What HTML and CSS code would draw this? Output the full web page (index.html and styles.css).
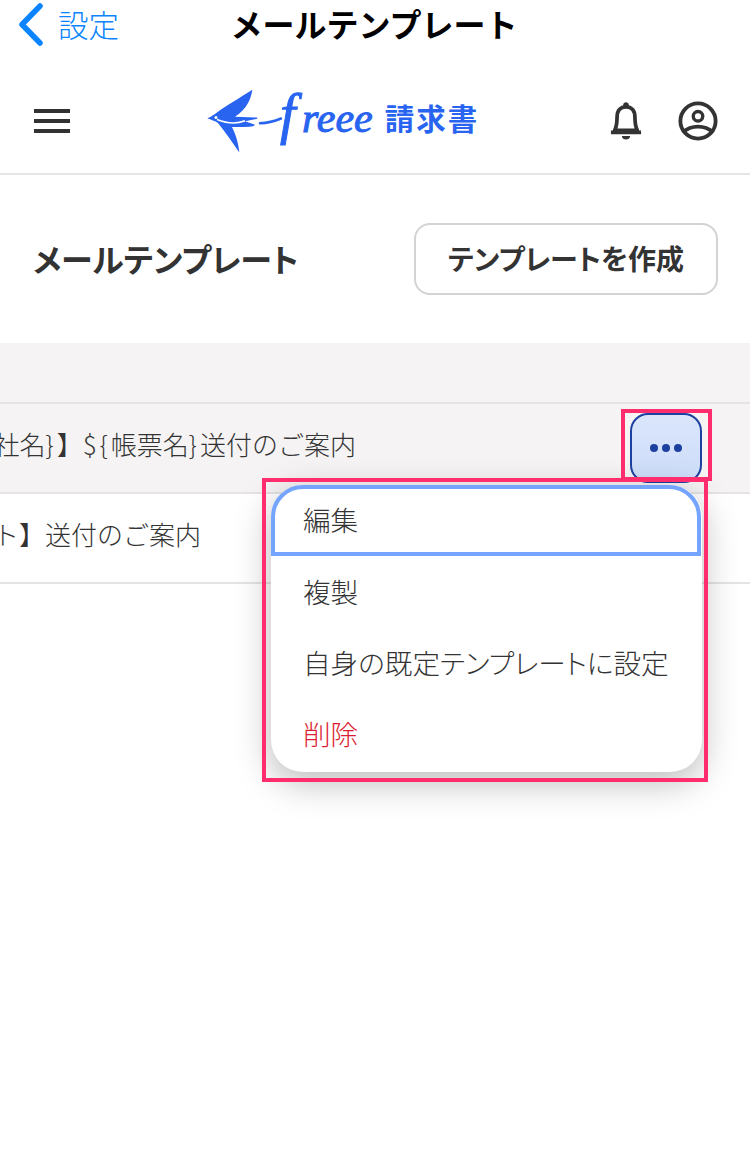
FILE: index.html
```html
<!DOCTYPE html>
<html lang="ja">
<head>
<meta charset="utf-8">
<title>メールテンプレート</title>
<link rel="stylesheet" href="styles.css">
</head>
<body>
<div class="page">
  <nav class="ios-nav">
    <div class="ios-back">
      <svg class="ios-chevron" width="28" height="44" viewBox="0 0 28 44"><path d="M22 3 L4 21.500 L22 40" fill="none" stroke="#0a84ff" stroke-width="5.500" stroke-linecap="round" stroke-linejoin="round"/></svg>
      <span>設定</span>
    </div>
    <div class="ios-title">メールテンプレート</div>
  </nav>
  <header class="app-header">
    <div class="hamburger"><i></i><i></i><i></i></div>
    <div class="logo">
      <svg class="logo-mark" width="180" height="70" viewBox="0 0 180 70">
        <path fill="#2864f0" d="M2.300 32.500 C5 31 7 30 10 28 C20 20 35 12 47.300 3.800 C46 13 42 23 30 30.800 L52.300 31.500 L52.300 32.800 L40 35.300 L50 38.800 L48.300 40.200 C40 41 33 41.300 27 41 C30 47 33.500 56 34.300 66.500 C28 57 20 46 13 37 C10 35 6 33.500 2.300 32.500 Z"/>
        <path fill="none" stroke="#fff" stroke-width="1.600" d="M12 33.500 C22 37.500 32 38 40 34.800"/>
        <circle cx="11" cy="31.500" r="1.500" fill="#fff"/>
        <path fill="none" stroke="#2864f0" stroke-width="2.500" stroke-linecap="round" d="M55 37.200 C63 37 70 35 76 32.500"/>
        <text class="logo-word"><tspan class="logo-f" x="75" y="47">f</tspan><tspan x="97" y="46">reee</tspan></text>
      </svg>
      <span class="logo-name">請求書</span>
    </div>
    <div class="header-icons">
      <svg width="32" height="40" viewBox="0 0 34 42"><path fill="none" stroke="#333" stroke-width="4" stroke-linejoin="round" d="M5 31 C7 27 7.500 23 7.500 17 C7.500 10 11 6 17 6 C23 6 26.500 10 26.500 17 C26.500 23 27 27 29 31 Z"/><path fill="#333" d="M1 31 H33 V35 H1 Z M14 4 C14 0 20 0 20 4 V7 H14 Z M12.500 37 H21.500 C21 42 13 42 12.500 37 Z"/></svg>
      <svg width="40" height="40" viewBox="0 0 42 42"><circle cx="21" cy="21" r="18.500" fill="none" stroke="#333" stroke-width="4"/><circle cx="21" cy="16" r="5" fill="none" stroke="#333" stroke-width="3.500"/><path fill="none" stroke="#333" stroke-width="4" d="M5 33 C14 25 28 25 37 33"/></svg>
    </div>
  </header>
  <section class="title-row">
    <h1 class="page-title">メールテンプレート</h1>
    <button class="create-btn">テンプレートを作成</button>
  </section>
  <div class="table">
    <div class="table-head"></div>
    <div class="row row-active">
      <div class="name name-long"><span>【<span class="sym">${</span>会社名<span class="sym">}</span>】<span class="sym">${</span>帳票名<span class="sym">}</span>送付のご案内</span></div>
      <button class="more-btn"><i></i><i></i><i></i></button>
    </div>
    <div class="row">
      <div class="name name-short"><span>【テスト】送付のご案内</span></div>
    </div>
  </div>
  <ul class="menu">
    <li class="menu-item menu-item-focus">編集</li>
    <li class="menu-item">複製</li>
    <li class="menu-item">自身の既定テンプレートに設定</li>
    <li class="menu-item menu-item-danger">削除</li>
  </ul>
  <div class="mark mark-btn"></div>
  <div class="mark mark-menu"></div>
</div>
</body>
</html>
```
FILE: styles.css
```css
* { box-sizing: border-box; }
html, body { margin: 0; padding: 0; background: #fff; }
body { font-family: "Noto Sans CJK JP", "Noto Sans", sans-serif; color: #333; }
.page { position: relative; width: 750px; height: 1170px; overflow: hidden; }

.ios-nav { position: relative; height: 50px; padding-bottom: 4px; display: flex; align-items: center; justify-content: center; }
.ios-back { position: absolute; left: 18px; top: 1px; display: flex; align-items: center; gap: 12px; color: #0a84ff; font-size: 30.500px; font-weight: 300; line-height: 44px; }
.ios-chevron { margin-top: 2px; }
.ios-title { margin-left: -2px; font-size: 32px; font-weight: 700; color: #000; line-height: 46px; }

.app-header { height: 125px; padding: 18px 32px 0 34px; border-bottom: 2px solid #e5e5e5; display: flex; align-items: center; justify-content: space-between; }
.hamburger { width: 36px; display: flex; flex-direction: column; gap: 6px; }
.hamburger i { display: block; height: 4px; background: #323232; }
.logo { display: flex; align-items: center; margin-left: 4px; }
.logo-mark { display: block; }
.logo-word { font-family: "Liberation Serif", serif; font-style: italic; font-size: 42px; fill: #2864f0; stroke: #2864f0; stroke-width: 1px; }
.logo-f { font-size: 56px; }
.logo-name { margin-bottom: 7px; color: #2864f0; font-size: 29.500px; font-weight: 700; letter-spacing: 2px; }
.header-icons { display: flex; align-items: center; gap: 36px; }
.header-icons svg { display: block; }

.title-row { height: 168px; padding: 0 32px 0 33px; display: flex; align-items: center; justify-content: space-between; }
.page-title { margin: 0 0 3px; font-size: 32px; font-weight: 700; font-feature-settings: "palt"; }
.create-btn { width: 304px; height: 72px; padding: 0 0 2px; border: 2px solid #d4d2d2; border-radius: 16px; background: #fff; color: #333; font: 700 28px "Noto Sans CJK JP", sans-serif; font-feature-settings: "palt"; }

.table-head { height: 61px; background: #f5f3f3; border-bottom: 2px solid #e5e3e3; }
.row { height: 90px; display: flex; align-items: center; justify-content: space-between; border-bottom: 2px solid #e5e3e3; padding-right: 48px; font-size: 26px; font-weight: 300; }
.row-active { background: #f5f3f3; }
.name { padding-bottom: 10px; overflow: hidden; white-space: nowrap; display: flex; justify-content: flex-end; }
.name-long { width: 356px; }
.name-short { width: 201px; }
.sym { letter-spacing: 3px; }
.more-btn { width: 72px; height: 70px; padding: 0; border: 2.500px solid #1e40a0; border-radius: 18px; background: linear-gradient(#dbe6fb, #ccdcf9); display: flex; align-items: center; justify-content: center; gap: 4px; }
.more-btn i { width: 8px; height: 8px; border-radius: 50%; background: #1e40a0; }

.menu { position: absolute; left: 271px; top: 485px; width: 431px; height: 287px; margin: 0; padding: 0; list-style: none; background: #fff; border-radius: 32px; box-shadow: 0 10px 36px rgba(0, 0, 0, .28); }
.menu-item { height: 71px; padding: 0 32px 1px; display: flex; align-items: center; font-size: 27.600px; font-weight: 300; font-feature-settings: "palt"; white-space: nowrap; }
.menu-item-focus { border: 4px solid #75a4ff; border-radius: 32px 32px 0 0; padding: 0 32px 3px 28px; margin-right: 1px; }
.menu-item-danger { color: #dc1e32; }

.mark { position: absolute; border: 4px solid #ff2d6e; pointer-events: none; }
.mark-btn { left: 621px; top: 409px; width: 91px; height: 72px; }
.mark-menu { left: 262px; top: 478px; width: 446px; height: 304px; }
```
